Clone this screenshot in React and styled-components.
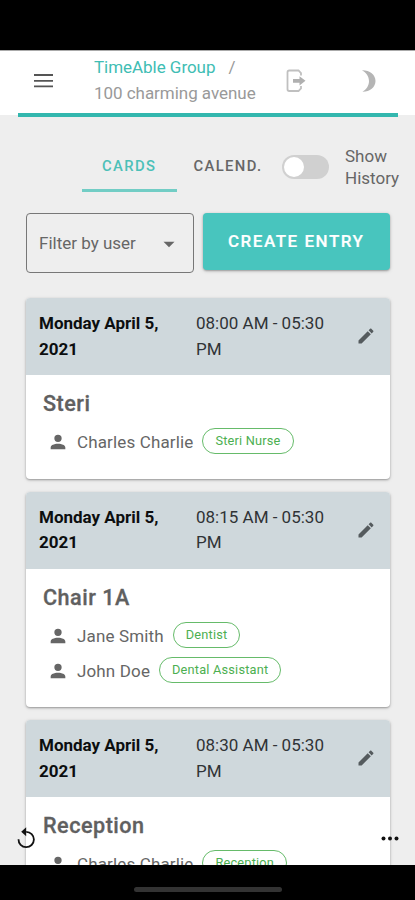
import React from "react";
import { useState } from "react";
import styled, { createGlobalStyle } from "styled-components";

const GlobalStyle = createGlobalStyle`
  * {
    box-sizing: border-box;
  }
  body {
    margin: 0;
    background: #000;
    overflow: hidden;
  }
  button {
    font-family: inherit;
    border: none;
    background: none;
    padding: 0;
  }
  svg {
    display: block;
  }
`;

const Phone = styled.div`
  width: 415px;
  height: 900px;
  background: #000;
  display: flex;
  flex-direction: column;
  padding-top: 50px;
  font-family: Roboto, sans-serif;
  font-size: 17px;
  color: #666;
`;

const Screen = styled.div`
  height: 815px;
  flex: none;
  background: #eee;
  border-top: 1px solid #aaa;
  overflow: hidden;
  position: relative;
`;

const TopBar = styled.header`
  height: 64px;
  background: #fff;
  display: grid;
  grid-template-columns: 60.5px 180px 83px 1fr;
  align-items: center;
  padding: 0 11px 5px 33.5px;
`;

const TopLine = styled.div`
  height: 4px;
  margin: -2.5px 17px 0 18px;
  position: relative;
  background: #33b7ae;
`;

const Crumbs = styled.div`
  line-height: 25.6px;
  letter-spacing: -0.04px;
  color: #999;
  white-space: nowrap;
  a {
    color: #40bdb4;
    margin-right: 13px;
  }
`;

const BarAction = styled.button`
  justify-self: start;
  margin-left: 11.5px;
`;

const Nav = styled.nav`
  display: flex;
  align-items: center;
  height: 51px;
  margin: 24.5px 0 21px;
  padding-left: 81.5px;
`;

const Tab = styled.button`
  width: ${(p) => p.$width}px;
  height: 51px;
  font-size: 14.8px;
  font-weight: 500;
  letter-spacing: 1.4px;
  color: ${(p) => (p.$active ? "#4cc0b8" : "#666")};
  border-bottom: 3px solid ${(p) => (p.$active ? "#72cdc5" : "transparent")};
  padding: 2px 0 0;
`;

const Switch = styled.button`
  width: 47px;
  height: 24px;
  border-radius: 12px;
  background: #d0d0d0;
  margin: 0 16px 0 3px;
  padding: 2px;
  display: flex;
  justify-content: ${(p) => (p.$on ? "flex-end" : "flex-start")};
  span {
    width: 20px;
    height: 20px;
    border-radius: 50%;
    background: #fff;
  }
`;

const SwitchLabel = styled.span`
  width: 60px;
  line-height: 21.3px;
  padding-top: 2px;
`;

const Controls = styled.div`
  display: flex;
  gap: 8.5px;
  padding: 0 25px 0 25.5px;
`;

const Select = styled.div`
  width: 168.5px;
  height: 60px;
  border: 1px solid #777;
  border-radius: 4px;
  display: flex;
  align-items: center;
  justify-content: space-between;
  padding: 0 13px 1px 12.5px;
`;

const CreateBtn = styled.button`
  flex: 1;
  height: 56.5px;
  border-radius: 4px;
  background: #48c5be;
  color: #fff;
  font-size: 17px;
  font-weight: 500;
  letter-spacing: 1.52px;
  -webkit-text-stroke: 0.2px #fff;
  box-shadow: 0 1px 2px rgba(0, 0, 0, 0.28), 0 1px 4px rgba(0, 0, 0, 0.14);
`;

const CardList = styled.div`
  display: flex;
  flex-direction: column;
  gap: 13.3px;
  padding: 25.2px 25px 0 25.5px;
`;

const Card = styled.section`
  border-radius: 4px;
  background: #fff;
  overflow: hidden;
  box-shadow: 0 1px 2px rgba(0, 0, 0, 0.3), 0 1px 4px rgba(0, 0, 0, 0.12);
`;

const CardHead = styled.div`
  height: 76.7px;
  background: #cfd8dc;
  display: grid;
  grid-template-columns: 157px 140px 1fr;
  align-items: center;
  padding: 0 14px 0 13.5px;
  line-height: 25.5px;
  color: #303336;
  svg {
    justify-self: end;
    margin-bottom: 1.5px;
  }
`;

const DateText = styled.div`
  width: 130px;
  font-weight: 700;
  color: #0c0e0f;
`;

const CardBody = styled.div`
  padding: 12.2px 17.5px 20.3px;
`;

const Room = styled.h2`
  margin: 0 0 3px;
  font-size: 21.6px;
  font-weight: 500;
  line-height: 34px;
  letter-spacing: 0.5px;
  color: #606060;
  -webkit-text-stroke: 0.3px #606060;
`;

const Person = styled.div`
  height: 34.4px;
  display: flex;
  align-items: center;
  padding-left: 4px;
  svg {
    margin: 2px 8px 0 0;
  }
`;

const Name = styled.span`
  letter-spacing: 0.14px;
  padding-top: 2px;
`;

const Chip = styled.span`
  height: 26px;
  margin-left: 9px;
  padding: 0 12px;
  border: 1px solid #66bb6a;
  border-radius: 13px;
  font-size: 12.77px;
  line-height: 23px;
  letter-spacing: 0.2px;
  color: #4caf50;
`;

const Floating = styled.button`
  position: absolute;
  left: ${(p) => p.$left}px;
  top: ${(p) => p.$top}px;
`;

const HomeBar = styled.div`
  width: 148px;
  height: 5px;
  border-radius: 3px;
  background: #333;
  margin: 22px 0 0 134px;
`;

const shifts = [
  {
    date: "Monday April 5, 2021",
    time: "08:00 AM - 05:30 PM",
    room: "Steri",
    people: [{ name: "Charles Charlie", role: "Steri Nurse" }],
  },
  {
    date: "Monday April 5, 2021",
    time: "08:15 AM - 05:30 PM",
    room: "Chair 1A",
    people: [
      { name: "Jane Smith", role: "Dentist" },
      { name: "John Doe", role: "Dental Assistant" },
    ],
  },
  {
    date: "Monday April 5, 2021",
    time: "08:30 AM - 05:30 PM",
    room: "Reception",
    people: [{ name: "Charles Charlie", role: "Reception" }],
  },
];

//icons
const MenuIcon = () => (
  <svg width="20" height="14" viewBox="0 0 20 14" stroke="#555" strokeWidth="1.8">
    <path d="M0 1h19M0 6.8h19M0 12.4h19" />
  </svg>
);
const LogoutIcon = () => (
  <svg width="20" height="24" viewBox="0 0 20 24" fill="none">
    <path
      d="M15 6.500V4.200L12.500 1.500H3.200Q1.500 1.500 1.500 3.200V20.300Q1.500 22 3.200 22H12.500l2.500-2.700V17"
      stroke="#c0c0c0"
      strokeWidth="1.8"
    />
    <path d="M7 10h6.500V7.200L19.500 11.800l-6 4.600V13.700H7z" fill="#b0b0b0" />
  </svg>
);
const MoonIcon = () => (
  <svg width="16" height="24" viewBox="0 0 16 24">
    <path d="M1 1.200C8.500 1 14.500 5.500 14.500 12S8.500 23 1.500 22.800C5.500 20.500 8 16.500 8 12S5.200 3.500 1 1.200z" fill="#b5b5b5" />
  </svg>
);
const PersonIcon = () => (
  <svg width="22" height="22" viewBox="0 0 24 24" fill="#666">
    <path d="M12 4a4 4 0 1 1 0 8 4 4 0 0 1 0-8m0 10c4.420 0 8 1.790 8 4v2H4v-2c0-2.210 3.580-4 8-4z" />
  </svg>
);
const PencilIcon = () => (
  <svg width="20" height="20" viewBox="0 0 24 24" fill="#555b5e">
    <path d="M20.710 7.040c.39-.39.39-1.040 0-1.410l-2.340-2.340c-.37-.39-1.020-.39-1.410 0l-1.840 1.830 3.750 3.750M3 17.250V21h3.750L17.810 9.930l-3.750-3.750L3 17.250z" />
  </svg>
);
const ResetIcon = () => (
  <svg width="20" height="22" viewBox="0 0 20 22">
    <path d="M1.500 12.300A7.700 7.700 0 1 0 9.200 4.800" fill="none" stroke="#111" strokeWidth="1.8" />
    <path d="M9.200.3v9L4.200 4.800z" fill="#111" />
  </svg>
);
const DotsIcon = () => (
  <svg width="18" height="5" viewBox="0 0 18 5" fill="#111">
    <circle cx="2.500" cy="2.500" r="2" />
    <circle cx="9" cy="2.500" r="2" />
    <circle cx="15.500" cy="2.500" r="2" />
  </svg>
);

export default function App() {
  const [tab, setTab] = useState("cards");
  const [showHistory, setShowHistory] = useState(false);

  return (
    <Phone>
      <GlobalStyle />
      <Screen>
        <TopBar>
          <MenuIcon />
          <Crumbs>
            <a>TimeAble Group</a>/<br />
            100 charming avenue
          </Crumbs>
          <BarAction>
            <LogoutIcon />
          </BarAction>
          <BarAction style={{ marginLeft: 4 }}>
            <MoonIcon />
          </BarAction>
        </TopBar>
        <TopLine />
        <Nav>
          <Tab $width={95.5} $active={tab === "cards"} onClick={() => setTab("cards")}>
            CARDS
          </Tab>
          <Tab $width={102} $active={tab === "calendar"} onClick={() => setTab("calendar")}>
            CALEND.
          </Tab>
          <Switch $on={showHistory} onClick={() => setShowHistory(!showHistory)}>
            <span />
          </Switch>
          <SwitchLabel>Show History</SwitchLabel>
        </Nav>
        <Controls>
          <Select>
            Filter by user
            <svg width="22" height="22" viewBox="0 0 24 24" fill="#666">
              <path d="M6 10.500l6 6 6-6z" />
            </svg>
          </Select>
          <CreateBtn>CREATE ENTRY</CreateBtn>
        </Controls>
        <CardList>
          {shifts.map((shift) => (
            <Card key={shift.time}>
              <CardHead>
                <DateText>{shift.date}</DateText>
                <div>{shift.time}</div>
                <PencilIcon />
              </CardHead>
              <CardBody>
                <Room>{shift.room}</Room>
                {shift.people.map((person) => (
                  <Person key={person.name}>
                    <PersonIcon />
                    <Name>{person.name}</Name>
                    <Chip>{person.role}</Chip>
                  </Person>
                ))}
              </CardBody>
            </Card>
          ))}
        </CardList>
        <Floating $left={17} $top={776}>
          <ResetIcon />
        </Floating>
        <Floating $left={381} $top={785}>
          <DotsIcon />
        </Floating>
      </Screen>
      <HomeBar />
    </Phone>
  );
}
